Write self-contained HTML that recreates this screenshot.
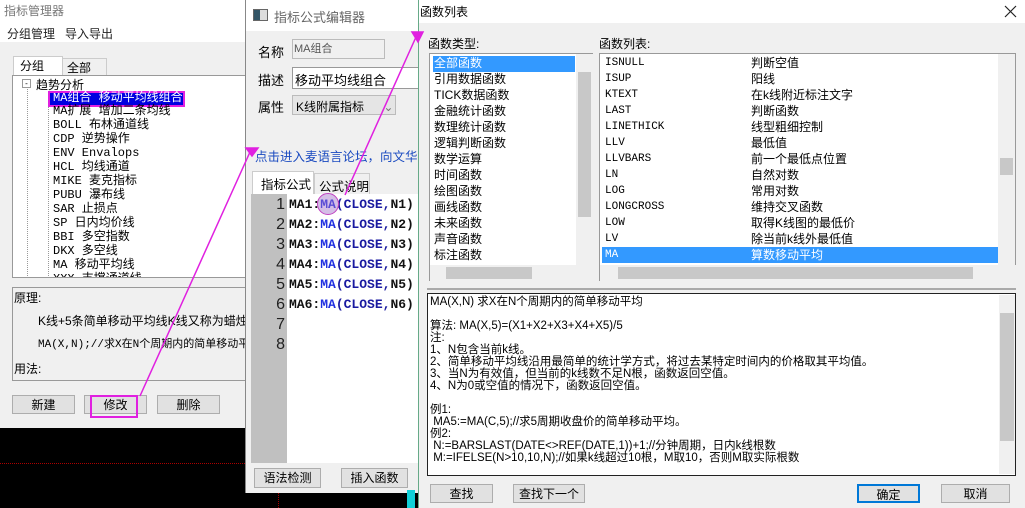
<!DOCTYPE html>
<html><head><meta charset="utf-8"><style>
*{margin:0;padding:0;box-sizing:border-box}
body{width:1025px;height:508px;overflow:hidden;background:#000;font-family:"Liberation Sans","Noto Sans CJK SC",sans-serif;font-size:12px;color:#000;position:relative}
.a{position:absolute;white-space:nowrap}
.btn{position:absolute;background:#e1e1e1;border:1px solid #adadad;text-align:center;font-size:12px;line-height:18px}
.mono{font-family:"Liberation Mono","Noto Sans CJK SC",monospace}
</style></head><body>

<!-- left window -->
<div class="a" style="left:0;top:0;width:246px;height:428px;background:#f0f0f0"></div>
<div class="a" style="left:0;top:0;width:246px;height:42px;background:#fff"></div>
<div class="a" style="left:4px;top:2px;color:#777;font-size:12px">指标管理器</div>
<div class="a" style="left:7px;top:25px;font-size:12px;color:#222">分组管理&nbsp;&nbsp;&nbsp;导入导出</div>
<div class="a" style="left:13px;top:56px;width:50px;height:20px;background:#fff;border:1px solid #ccc;border-bottom:none;padding-left:6px;line-height:18px">分组</div>
<div class="a" style="left:62px;top:58px;width:45px;height:17px;background:#f0f0f0;border:1px solid #ccc;border-bottom:none;padding-left:4px;line-height:18px">全部</div>
<div class="a" style="left:12px;top:75px;width:234px;height:203px;background:#fff;border:1px solid #999;overflow:hidden">
 <div class="a" style="left:14px;top:10px;width:1px;height:200px;border-left:1px dotted #999"></div>
 <div class="a" style="left:35px;top:16px;width:1px;height:200px;border-left:1px dotted #999"></div>
 <div class="a" style="left:9px;top:3px;width:9px;height:9px;border:1px solid #999;font-size:8px;line-height:7px;text-align:center;background:#fff">-</div>
 <div class="a" style="left:23px;top:0px">趋势分析</div>
 <div class="a" style="left:35px;top:15px;width:137px;height:16px;background:#0000e0;border:2px solid #e020e0"></div>
 <div class="a mono" style="left:40px;top:14px;color:#fff;font-size:12px;line-height:16px">MA组合 移动平均线组合</div>
 <div class="a mono" style="left:40px;top:28px;line-height:14px;font-size:12px">MA扩展 增加二条均线<br>BOLL 布林通道线<br>CDP 逆势操作<br>ENV Envalops<br>HCL 均线通道<br>MIKE 麦克指标<br>PUBU 瀑布线<br>SAR 止损点<br>SP 日内均价线<br>BBI 多空指数<br>DKX 多空线<br>MA 移动平均线<br>XXX 支撑通道线</div>
</div>
<div class="a" style="left:12px;top:287px;width:234px;height:94px;border:1px solid #999;background:#f0f0f0">
 <div class="a" style="left:1px;top:1px">原理:</div>
 <div class="a" style="left:25px;top:24px">K线+5条简单移动平均线K线又称为蜡烛图</div>
 <div class="a mono" style="left:25px;top:47px;font-size:11px">MA(X,N);//求X在N个周期内的简单移动平</div>
 <div class="a" style="left:1px;top:72px">用法:</div>
</div>
<div class="btn" style="left:12px;top:395px;width:63px;height:19px">新建</div>
<div class="btn" style="left:84px;top:395px;width:63px;height:19px">修改</div>
<div class="btn" style="left:157px;top:395px;width:63px;height:19px">删除</div>
<div class="a" style="left:90px;top:395px;width:48px;height:23px;border:2px solid #e020e0"></div>
<div class="a" style="left:0;top:463px;width:245px;border-top:1px dotted #a00"></div>
<div class="a" style="left:278px;top:490px;height:18px;border-left:1px dotted #a00"></div>

<!-- middle window -->
<div class="a" style="left:245px;top:0;width:175px;height:493px;background:#f0f0f0;border-left:1px solid #888"></div>
<div class="a" style="left:246px;top:0;width:174px;height:31px;background:#fff"></div>
<div class="a" style="left:253px;top:9px;width:15px;height:12px;border:1px solid #666;background:#ddd"><div style="width:6px;height:10px;background:#356"></div></div>
<div class="a" style="left:274px;top:7px;color:#666;font-size:13px">指标公式编辑器</div>
<div class="a" style="left:258px;top:42px;font-size:13px">名称</div>
<div class="a" style="left:292px;top:39px;width:93px;height:20px;background:#f0f0f0;border:1px solid #bbb;font-size:11px;color:#555;padding-left:1px">MA组合</div>
<div class="a" style="left:258px;top:70px;font-size:13px">描述</div>
<div class="a" style="left:292px;top:67px;width:130px;height:22px;background:#fff;border:1px solid #999;font-size:13px;padding:2px 2px">移动平均线组合</div>
<div class="a" style="left:258px;top:97px;font-size:13px">属性</div>
<div class="a" style="left:292px;top:95px;width:104px;height:20px;background:#e5e5e5;border:1px solid #bbb;font-size:12px;padding:2px 3px">K线附属指标 <span style="margin-left:16px;color:#777">⌄</span></div>
<div class="a" style="left:255px;top:146px;color:#1a4ac0;font-size:12.5px">点击进入麦语言论坛，向文华提</div>
<div class="a" style="left:252px;top:171px;width:62px;height:23px;background:#fff;border:1px solid #ccc;border-bottom:none;font-size:12.5px;padding:2px 8px">指标公式</div>
<div class="a" style="left:314px;top:173px;width:56px;height:21px;border:1px solid #ccc;border-bottom:none;font-size:12.5px;padding:2px 4px">公式说明</div>
<div class="a" style="left:251px;top:194px;width:170px;height:269px;background:#fff"></div>
<div class="a" style="left:251px;top:194px;width:36px;height:269px;background:#c0c0c0"></div>
<div class="a" style="left:251px;top:195px;width:34px;text-align:right;font-size:16px;line-height:20px;color:#222">1<br>2<br>3<br>4<br>5<br>6<br>7<br>8</div>
<div class="a mono" style="left:289px;top:195px;font-size:13px;font-weight:bold;line-height:20px;color:#111">MA1:<span style="color:#2030e0">MA</span><span style="color:#1a1aa0">(CLOSE,</span>N1)<br>MA2:<span style="color:#2030e0">MA</span><span style="color:#1a1aa0">(CLOSE,</span>N2)<br>MA3:<span style="color:#2030e0">MA</span><span style="color:#1a1aa0">(CLOSE,</span>N3)<br>MA4:<span style="color:#2030e0">MA</span><span style="color:#1a1aa0">(CLOSE,</span>N4)<br>MA5:<span style="color:#2030e0">MA</span><span style="color:#1a1aa0">(CLOSE,</span>N5)<br>MA6:<span style="color:#2030e0">MA</span><span style="color:#1a1aa0">(CLOSE,</span>N6)</div>
<div class="a" style="left:317px;top:193px;width:22px;height:22px;border-radius:50%;background:rgba(160,110,200,.45);border:1px solid #c040c0"></div>
<div class="btn" style="left:254px;top:468px;width:67px;height:20px">语法检测</div>
<div class="btn" style="left:341px;top:468px;width:67px;height:20px">插入函数</div>
<div class="a" style="left:407px;top:490px;width:8px;height:18px;background:#10d0d8"></div>

<!-- right window -->
<div class="a" style="left:418px;top:0;width:607px;height:508px;background:#f0f0f0;border-left:1px solid #6a8"></div>
<div class="a" style="left:419px;top:0;width:606px;height:23px;background:#fff"></div>
<div class="a" style="left:420px;top:3px;font-size:12px">函数列表</div>
<svg class="a" style="left:1004px;top:5px" width="13" height="13"><path d="M1 1L12 12M12 1L1 12" stroke="#222" stroke-width="1.2"/></svg>
<div class="a" style="left:428px;top:35px;font-size:12px">函数类型:</div>
<div class="a" style="left:599px;top:35px;font-size:12px">函数列表:</div>
<div class="a" style="left:429px;top:53px;width:164px;height:228px;background:#fff;border:1px solid #999">
 <div class="a" style="left:3px;top:2px;width:142px;height:16px;background:#3399ff"></div>
 <div class="a" style="left:4px;top:1px;line-height:16px;font-size:12px"><span style="color:#fff">全部函数</span><br>引用数据函数<br>TICK数据函数<br>金融统计函数<br>数理统计函数<br>逻辑判断函数<br>数学运算<br>时间函数<br>绘图函数<br>画线函数<br>未来函数<br>声音函数<br>标注函数</div>
 <div class="a" style="left:146px;top:0;width:17px;height:211px;background:#f0f0f0"><div style="margin:18px 2px;height:145px;background:#c8c8c8"></div></div>
 <div class="a" style="left:0;top:211px;width:163px;height:16px;background:#f0f0f0"><div style="margin:2px 0 0 16px;width:86px;height:12px;background:#c8c8c8"></div></div>
</div>
<div class="a" style="left:599px;top:53px;width:417px;height:228px;background:#fff;border:1px solid #999">
 <div class="a" style="left:2px;top:193px;width:396px;height:16px;background:#3399ff"></div>
 <div class="a mono" style="left:5px;top:1px;line-height:16px;font-size:11px">ISNULL<br>ISUP<br>KTEXT<br>LAST<br>LINETHICK<br>LLV<br>LLVBARS<br>LN<br>LOG<br>LONGCROSS<br>LOW<br>LV<br><span style="color:#fff">MA</span></div>
 <div class="a" style="left:151px;top:1px;line-height:16px;font-size:12px">判断空值<br>阳线<br>在k线附近标注文字<br>判断函数<br>线型粗细控制<br>最低值<br>前一个最低点位置<br>自然对数<br>常用对数<br>维持交叉函数<br>取得K线图的最低价<br>除当前k线外最低值<br><span style="color:#fff">算数移动平均</span></div>
 <div class="a" style="left:398px;top:0;width:17px;height:211px;background:#f0f0f0"><div style="margin:104px 2px;height:17px;background:#c8c8c8"></div></div>
 <div class="a" style="left:0;top:211px;width:416px;height:16px;background:#f0f0f0"><div style="margin:2px 0 0 18px;width:355px;height:12px;background:#c8c8c8"></div></div>
</div>
<div class="a" style="left:427px;top:288px;width:589px;border-top:2px solid #aaa"></div>
<div class="a" style="left:427px;top:293px;width:589px;height:183px;background:#fff;border:1px solid #222;overflow:hidden">
 <div class="a" style="left:571px;top:1px;width:16px;height:179px;background:#f0f0f0"><div style="margin:18px 1px;height:128px;background:#c8c8c8"></div></div>
 <div class="a" style="left:2px;top:2px;font-size:11.5px;line-height:12px;white-space:pre">MA(X,N) 求X在N个周期内的简单移动平均

算法: MA(X,5)=(X1+X2+X3+X4+X5)/5
注:
1、N包含当前k线。
2、简单移动平均线沿用最简单的统计学方式，将过去某特定时间内的价格取其平均值。
3、当N为有效值，但当前的k线数不足N根，函数返回空值。
4、N为0或空值的情况下，函数返回空值。

例1:
 MA5:=MA(C,5);//求5周期收盘价的简单移动平均。
例2:
 N:=BARSLAST(DATE&lt;&gt;REF(DATE,1))+1;//分钟周期，日内k线根数
 M:=IFELSE(N&gt;10,10,N);//如果k线超过10根，M取10，否则M取实际根数</div>
</div>
<div class="btn" style="left:430px;top:484px;width:63px;height:19px">查找</div>
<div class="btn" style="left:513px;top:484px;width:72px;height:19px">查找下一个</div>
<div class="btn" style="left:857px;top:484px;width:63px;height:19px;border:2px solid #0078d7">确定</div>
<div class="btn" style="left:941px;top:484px;width:69px;height:19px">取消</div>

<!-- arrows -->
<svg class="a" style="left:0;top:0" width="1025" height="508">
 <g stroke="#e020e0" stroke-width="1.5" fill="#e020e0">
  <line x1="140" y1="396" x2="250" y2="152"/>
  <polygon points="246,148 258,148 252,156" />
  <line x1="345" y1="195" x2="416" y2="37"/>
  <polygon points="412,32 423,32 418,42"/>
 </g>
</svg>
</body></html>
